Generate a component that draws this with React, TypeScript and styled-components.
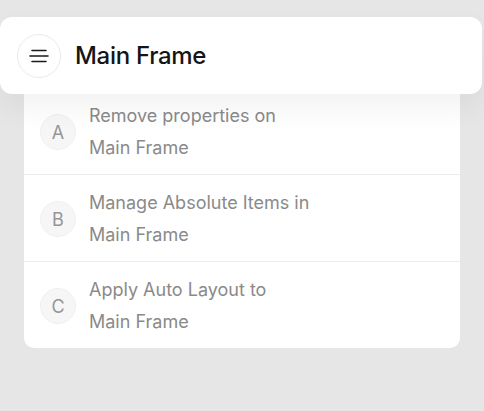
import React from 'react'
import styled, { createGlobalStyle } from 'styled-components'

const GlobalStyle = createGlobalStyle`
  html, body {
    margin: 0;
    padding: 0;
    background: #e6e6e6;
    font-family: Inter, 'Noto Sans', sans-serif;
  }
`

const Page = styled.div`
  padding-top: 17px;
  height: 394px;
  box-sizing: content-box;
`

const Header = styled.div`
  position: relative;
  z-index: 1;
  width: 482px;
  height: 77px;
  box-sizing: border-box;
  background: #ffffff;
  border-radius: 12px;
  display: flex;
  align-items: center;
  padding-left: 17px;
  gap: 14px;
  box-shadow: 0 14px 30px rgba(0, 0, 0, 0.055);
`

const MenuButton = styled.button`
  width: 44px;
  height: 44px;
  border-radius: 50%;
  border: 1px solid #ebebeb;
  background: #ffffff;
  display: flex;
  align-items: center;
  justify-content: center;
  padding: 0;
`

const Title = styled.h1`
  margin: 0;
  font-size: 24px;
  font-weight: 500;
  letter-spacing: -0.3px;
  color: #151515;
`

const List = styled.ul`
  list-style: none;
  margin: -6px 24px 0;
  padding: 0;
  width: 436px;
  background: #ffffff;
  border-radius: 0 0 10px 10px;
  overflow: hidden;
`

const Row = styled.li`
  display: flex;
  align-items: center;
  gap: 13px;
  padding: 12px 16px 10px 16px;
  & + & {
    border-top: 1px solid #ececec;
  }
`

const Badge = styled.span`
  flex: none;
  width: 36px;
  height: 36px;
  border-radius: 50%;
  background: #f6f6f6;
  border: 1px solid #f0f0f0;
  box-sizing: border-box;
  display: flex;
  align-items: center;
  justify-content: center;
  font-size: 18px;
  color: #959595;
`

const Label = styled.span`
  font-size: 18px;
  line-height: 32px;
  color: #8a8a8a;
  font-weight: 400;
`

const items = [
  { key: 'A', lines: ['Remove properties on', 'Main Frame'] },
  { key: 'B', lines: ['Manage Absolute Items in', 'Main Frame'] },
  { key: 'C', lines: ['Apply Auto Layout to', 'Main Frame'] },
]

const MenuIcon = () => (
  <svg width="22" height="16" viewBox="0 0 22 16" fill="none">
    <path d="M4 2.5h14M2 8h18M4 13.5h14" stroke="#1a1a1a" strokeWidth="1.6" strokeLinecap="round" />
  </svg>
)

export default function App() {
  return (
    <>
      <GlobalStyle />
      <Page>
        <Header>
          <MenuButton aria-label="menu">
            <MenuIcon />
          </MenuButton>
          <Title>Main Frame</Title>
        </Header>
        <List>
          {items.map((item) => (
            <Row key={item.key}>
              <Badge>{item.key}</Badge>
              <Label>
                {item.lines[0]}
                <br />
                {item.lines[1]}
              </Label>
            </Row>
          ))}
        </List>
      </Page>
    </>
  )
}
